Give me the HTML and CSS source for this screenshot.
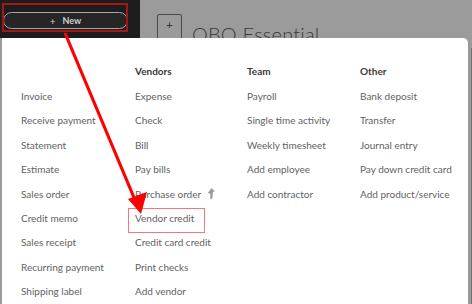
FILE: index.html
```html
<!DOCTYPE html>
<html>
<head>
<meta charset="utf-8">
<link rel="stylesheet" href="styles.css">
</head>
<body>
<div class="top">
  <div class="sidebar">
    <button class="new-btn"><span class="plus">+</span>New</button>
  </div>
  <div class="main-head">
    <div class="add-box">+</div>
    <div class="company">QBO Essential</div>
  </div>
  <div class="scroll-edge"></div>
</div>

<div class="menu">
  <div class="col">
    <div class="head">&nbsp;</div>
    <div class="item">Invoice</div>
    <div class="item">Receive payment</div>
    <div class="item">Statement</div>
    <div class="item">Estimate</div>
    <div class="item">Sales order</div>
    <div class="item">Credit memo</div>
    <div class="item">Sales receipt</div>
    <div class="item">Recurring payment</div>
    <div class="item">Shipping label</div>
  </div>
  <div class="col">
    <div class="head">Vendors</div>
    <div class="item">Expense</div>
    <div class="item">Check</div>
    <div class="item">Bill</div>
    <div class="item">Pay bills</div>
    <div class="item">Purchase order <svg class="pin" width="8" height="11" viewBox="0 0 8 11"><path d="M4.5 0 L8 3.5 L6 3.8 L5.2 11 L3.4 11 L3.2 5.5 L0.8 5 Z" fill="#9a9a9a"/></svg></div>
    <div class="item vendor">Vendor credit</div>
    <div class="item">Credit card credit</div>
    <div class="item">Print checks</div>
    <div class="item">Add vendor</div>
  </div>
  <div class="col">
    <div class="head">Team</div>
    <div class="item">Payroll</div>
    <div class="item">Single time activity</div>
    <div class="item">Weekly timesheet</div>
    <div class="item">Add employee</div>
    <div class="item">Add contractor</div>
  </div>
  <div class="col">
    <div class="head">Other</div>
    <div class="item">Bank deposit</div>
    <div class="item">Transfer</div>
    <div class="item">Journal entry</div>
    <div class="item">Pay down credit card</div>
    <div class="item">Add product/service</div>
  </div>
</div>

<div class="mark-new"></div>
<div class="mark-vendor"></div>
<svg class="arrow" width="472" height="304" viewBox="0 0 472 304">
  <line x1="65" y1="33" x2="135" y2="200" stroke="#ff0000" stroke-width="3.2"/>
  <polygon points="141,214 128,199 147,192" fill="#ff0000"/>
</svg>
</body>
</html>
```

FILE: styles.css
```css
html, body {
  margin: 0;
  padding: 0;
}
body {
  width: 472px;
  height: 304px;
  overflow: hidden;
  background: #9b9b9b;
  font-family: Lato, "Noto Sans", sans-serif;
  position: relative;
}
.top {
  display: flex;
  height: 38px;
}
.sidebar {
  width: 140px;
  background: #1d1d1d;
  padding: 12px 0 0 3px;
  box-sizing: border-box;
}
.new-btn {
  width: 125px;
  height: 17px;
  border: 1px solid #a8a8a8;
  border-radius: 9px;
  background: #262626;
  color: #d0d0d0;
  font-family: Lato, sans-serif;
  font-size: 9px;
  font-weight: bold;
  padding: 0;
  display: flex;
  align-items: center;
  justify-content: center;
  box-sizing: border-box;
}
.new-btn .plus {
  font-weight: normal;
  font-size: 10px;
  margin-right: 7px;
}
.main-head {
  flex: 1;
  display: flex;
  align-items: flex-start;
  padding: 14px 0 0 17px;
}
.add-box {
  width: 25px;
  height: 30px;
  border: 1.5px solid #4a4a4a;
  border-radius: 2px;
  box-sizing: border-box;
  color: #333;
  font-size: 11px;
  text-align: center;
  line-height: 20px;
}
.company {
  margin: 9px 0 0 10px;
  font-size: 20px;
  font-weight: 300;
  color: #383838;
  line-height: 22px;
  letter-spacing: 0.2px;
}
.scroll-edge {
  width: 1px;
}
.menu {
  position: absolute;
  left: 2px;
  top: 38px;
  width: 466px;
  height: 280px;
  background: #fff;
  border-radius: 0 5px 0 0;
  display: grid;
  grid-template-columns: 114px 112px 113px 1fr;
  padding: 21px 0 0 19px;
  box-sizing: border-box;
}
.col {
  display: flex;
  flex-direction: column;
}
.head {
  font-size: 10px;
  font-weight: bold;
  color: #3a3a3a;
  height: 25px;
  line-height: 24px;
}
.item {
  font-size: 10px;
  color: #626262;
  height: 24.4px;
  line-height: 24.4px;
  white-space: nowrap;
}
.pin {
  vertical-align: -1px;
  margin-left: 4px;
}
.mark-new {
  position: absolute;
  left: 2px;
  top: 3px;
  width: 126px;
  height: 29px;
  border: 2px solid #a51616;
  box-sizing: border-box;
}
.mark-vendor {
  position: absolute;
  left: 128px;
  top: 208px;
  width: 77px;
  height: 25px;
  border: 1.5px solid #f07a7a;
  box-sizing: border-box;
}
.arrow {
  position: absolute;
  left: 0;
  top: 0;
}
body::after {
  content: "";
  position: absolute;
  right: 0;
  top: 48px;
  width: 1.5px;
  height: 256px;
  background: #707070;
}
```
